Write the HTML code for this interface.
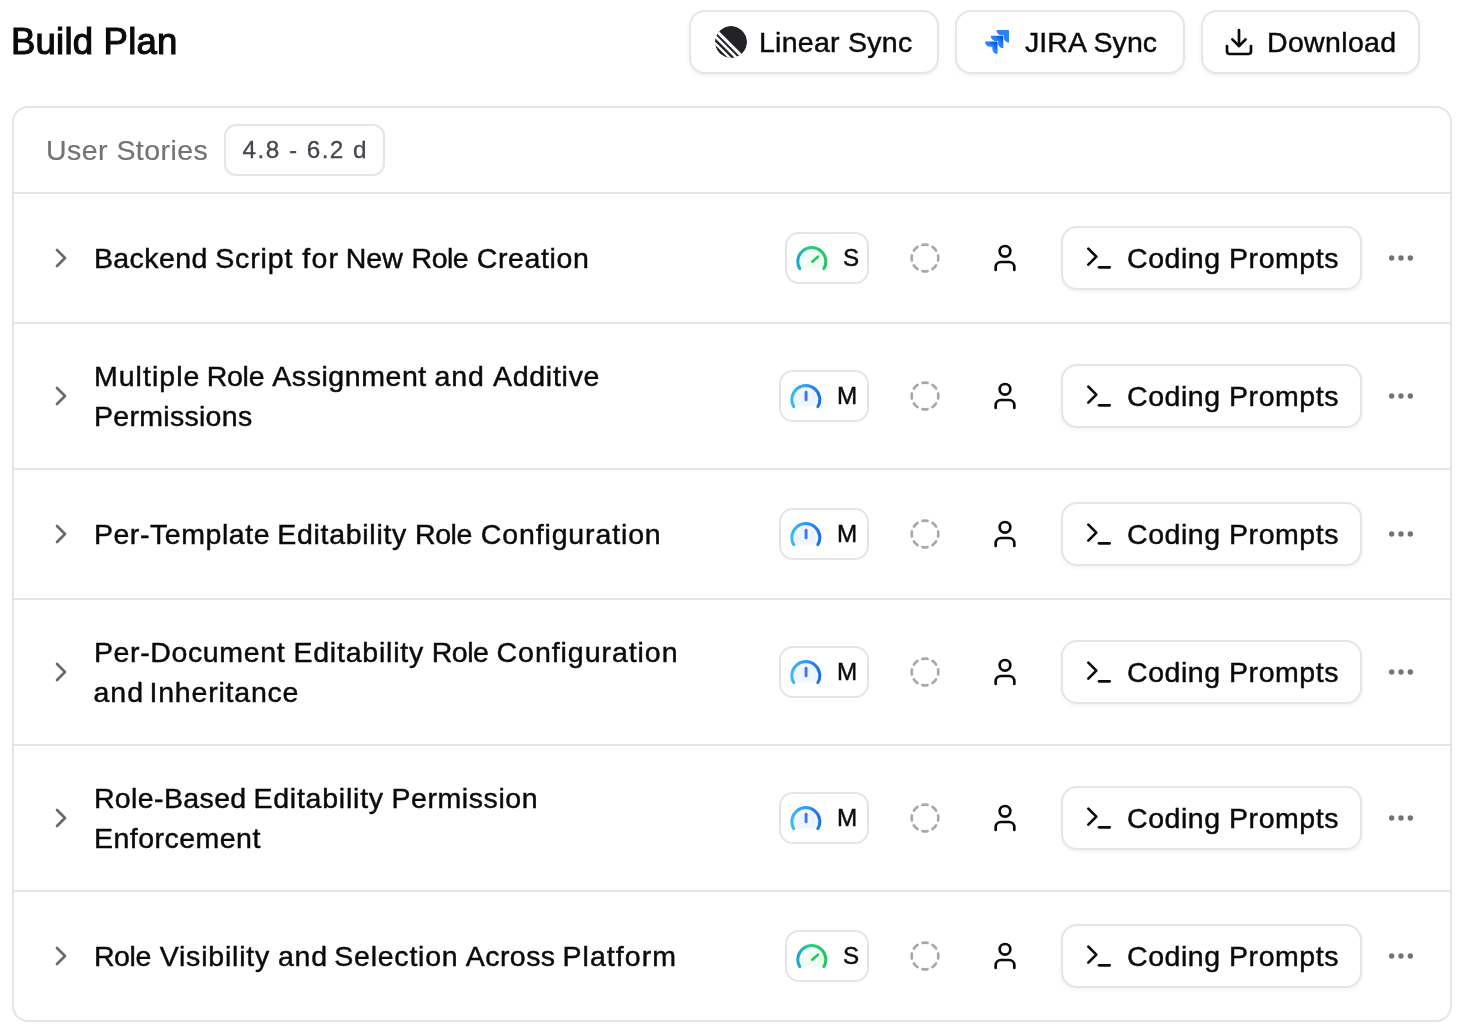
<!DOCTYPE html>
<html lang="en">
<head>
<meta charset="utf-8">
<title>Build Plan</title>
<style>
*{box-sizing:border-box;margin:0;padding:0}
html,body{width:1480px;height:1030px;background:#fff;overflow:hidden}
body{font-family:"Liberation Sans",sans-serif;color:#0a0a0a;position:relative}
h1{position:absolute;left:11.1px;top:20px;font-size:36.6px;line-height:44px;font-weight:400;-webkit-text-stroke:1.15px #0a0a0a;color:#0a0a0a;white-space:nowrap}
.btn{position:absolute;height:64px;top:10px;border:2px solid #e5e5e5;border-radius:16px;background:#fff;box-shadow:0 2px 4px rgba(0,0,0,.05);font-size:28.5px;line-height:40px;color:#0a0a0a;white-space:nowrap}
.btn svg{position:absolute}
.btn span{position:absolute;top:10px}
.card{position:absolute;left:12px;top:106px;width:1440px;height:916px;border:2px solid #e5e5e5;border-radius:16px;background:#fff}
.hdr{position:absolute;left:0;top:0;width:100%;height:86px;border-bottom:2px solid #e5e5e5}
.hdr .t{position:absolute;left:31.7px;top:21.5px;-webkit-text-stroke:.2px #737373;font-size:28.5px;line-height:40px;color:#737373;white-space:nowrap}
.hdr .b{position:absolute;left:210px;top:16px;width:161px;height:52px;-webkit-text-stroke:.3px #45464c;border:2px solid #e5e5e5;border-radius:12px;font-size:24.3px;line-height:47.6px;padding-left:1.6px;text-align:center;color:#45464c;white-space:nowrap}
.row{position:absolute;left:0;width:100%;border-bottom:2px solid #e5e5e5}
.row:last-child{border-bottom:none}
.chev{position:absolute;left:31px;top:50%;margin-top:-16px}
.txt{position:absolute;left:79.9px;top:50%;margin-top:-.35px;transform:translateY(-50%);font-size:28.5px;line-height:40px;color:#0a0a0a;white-space:nowrap}
.ln{display:block;position:relative;height:40px}
.w{position:absolute;top:0}
.size{position:absolute;top:50%;margin-top:-26px;height:52px;border:2px solid #e5e5e5;border-radius:14px;font-size:24.2px;line-height:30px;color:#0a0a0a}
.size.s{left:771.4px;width:83.4px}
.size.m{left:765.4px;width:89.4px}
.gauge{position:absolute;left:7.35px;top:7.9px}
.sl{position:absolute;top:9px}
.size.s .sl{left:55.2px}
.size.m .sl{left:56px}
.dash{position:absolute;left:895px;top:50%;margin-top:-16px}
.user{position:absolute;left:975px;top:50%;margin-top:-16px}
.cp{position:absolute;left:1047px;top:50%;margin-top:-32px;width:301px;height:64px;border:2px solid #e5e5e5;border-radius:16px;background:#fff;box-shadow:0 2px 4px rgba(0,0,0,.05);font-size:28.5px;line-height:40px;color:#0a0a0a;white-space:nowrap}
.term{position:absolute;left:20px;top:14px}
.cpt{position:absolute;left:63.7px;top:10px}
.dots{position:absolute;left:1371px;top:50%;margin-top:-16px}
.txt,.cpt,h1,.btn span,.hdr .t,.hdr .b,.sl{will-change:transform}
.txt,.cpt,.btn span,.sl{-webkit-text-stroke:.45px #0a0a0a}
</style>
</head>
<body>
<svg width="0" height="0" style="position:absolute">
  <defs>
    <linearGradient id="gS" x1="2" y1="0" x2="22" y2="0" gradientUnits="userSpaceOnUse"><stop offset="0" stop-color="#1ea5cf"/><stop offset=".4" stop-color="#25d087"/><stop offset="1" stop-color="#22c55e"/></linearGradient>
    <linearGradient id="gM" x1="2" y1="0" x2="22" y2="0" gradientUnits="userSpaceOnUse"><stop offset="0" stop-color="#38b8ff"/><stop offset=".5" stop-color="#3399f8"/><stop offset="1" stop-color="#1d6fe6"/></linearGradient>
    <linearGradient id="jg1" x1="12.3" y1="11.6" x2="7.2" y2="16.8" gradientUnits="userSpaceOnUse"><stop offset=".18" stop-color="#0052cc"/><stop offset="1" stop-color="#2684ff"/></linearGradient>
    <linearGradient id="jg2" x1="18" y1="5.8" x2="12.9" y2="11" gradientUnits="userSpaceOnUse"><stop offset=".18" stop-color="#0052cc"/><stop offset="1" stop-color="#2684ff"/></linearGradient>
    <clipPath id="lc"><circle cx="16" cy="16" r="16"/></clipPath>
  </defs>
</svg>
<h1 id="h1" style="letter-spacing:0.183px">Build Plan</h1>

<div class="btn" style="left:689px;width:250px">
  <svg style="left:24px;top:14px" width="32" height="32" viewBox="0 0 32 32"><g clip-path="url(#lc)"><circle cx="16" cy="16" r="16" fill="#222326"/><g stroke="#fff" fill="none"><path d="M-6 -2.66 L40 43.34" stroke-width="3.1"/><path d="M-6 4.2 L40 50.2" stroke-width="2.6"/><path d="M-6 11.12 L40 57.12" stroke-width="2.3"/></g></g></svg>
  <span id="b1" style="left:67.7px;top:9.6px;letter-spacing:0.267px">Linear Sync</span>
</div>
<div class="btn" style="left:955px;width:230px">
  <svg style="left:28px;top:18px" width="24" height="24" viewBox="0 0 24 24"><path fill="#2684ff" d="M23.013 0H11.455a5.215 5.215 0 0 0 5.215 5.215h2.129v2.057A5.215 5.215 0 0 0 24 12.483V1.005A1.001 1.001 0 0 0 23.013 0Z"/><path fill="url(#jg2)" d="M17.294 5.757H5.736a5.215 5.215 0 0 0 5.215 5.214h2.129v2.058a5.218 5.218 0 0 0 5.215 5.214V6.758a1.001 1.001 0 0 0-1.001-1.001z"/><path fill="url(#jg1)" d="M11.571 11.513H0a5.218 5.218 0 0 0 5.232 5.215h2.13v2.057A5.215 5.215 0 0 0 12.575 24V12.518a1.005 1.005 0 0 0-1.005-1.005z"/></svg>
  <span id="b2" style="left:68.3px;letter-spacing:0.077px">JIRA Sync</span>
</div>
<div class="btn" style="left:1201px;width:219px">
  <svg style="left:20px;top:14px" width="32" height="32" viewBox="0 0 24 24" fill="none" stroke="#0a0a0a" stroke-width="2" stroke-linecap="round" stroke-linejoin="round"><path d="M21 15v4a2 2 0 0 1-2 2H5a2 2 0 0 1-2-2v-4"/><polyline points="7 10 12 15 17 10"/><line x1="12" x2="12" y1="15" y2="3"/></svg>
  <span id="b3" style="left:64.3px;letter-spacing:0.341px">Download</span>
</div>

<div class="card">
  <div class="hdr"><span class="t" id="us" style="letter-spacing:0.459px">User Stories</span><span class="b"><span id="bd" style="letter-spacing:1.455px">4.8 - 6.2 d</span></span></div>
  <div class="row" style="top:86px;height:130px">
    <svg class="chev" width="32" height="32" viewBox="0 0 24 24" fill="none" stroke="#6a6a6a" stroke-width="2" stroke-linecap="round" stroke-linejoin="round"><path d="m9 18 6-6-6-6"/></svg>
    <div class="txt"><span class="ln" id="r0l0"><span class="w" id="r0l0w0" style="left:-0.11px;letter-spacing:0.409px">Backend</span><span class="w" id="r0l0w1" style="left:121.23px;letter-spacing:0.852px">Script</span><span class="w" id="r0l0w2" style="left:208.33px;letter-spacing:1.174px">for</span><span class="w" id="r0l0w3" style="left:251.87px;letter-spacing:-0.083px">New</span><span class="w" id="r0l0w4" style="left:317.55px;letter-spacing:-0.483px">Role</span><span class="w" id="r0l0w5" style="left:382.67px;letter-spacing:0.644px">Creation</span></span></div>
    <div class="size s"><svg class="gauge" width="33.6" height="33.6" viewBox="0 0 24 24" fill="none" stroke-width="2.15" stroke-linecap="round" stroke-linejoin="round"><path d="M3.34 19a10 10 0 1 1 17.32 0" fill="#f0fdf4" stroke="url(#gS)"/><path d="M12.35 14.1 16.45 10.45" stroke="#22c55e" stroke-width="1.85"/></svg><span class="sl">S</span></div>
    <svg class="dash" width="32" height="32" viewBox="0 0 24 24" fill="none" stroke="#a8a8a8" stroke-width="2" stroke-linecap="round" stroke-linejoin="round"><path d="M10.1 2.182a10 10 0 0 1 3.8 0"/><path d="M13.9 21.818a10 10 0 0 1-3.8 0"/><path d="M17.609 3.721a10 10 0 0 1 2.69 2.7"/><path d="M2.182 13.9a10 10 0 0 1 0-3.8"/><path d="M20.279 17.609a10 10 0 0 1-2.7 2.69"/><path d="M21.818 10.1a10 10 0 0 1 0 3.8"/><path d="M3.721 6.391a10 10 0 0 1 2.7-2.69"/><path d="M6.391 20.279a10 10 0 0 1-2.69-2.7"/></svg>
    <svg class="user" width="32" height="32" viewBox="0 0 24 24" fill="none" stroke="#0a0a0a" stroke-width="2" stroke-linecap="round" stroke-linejoin="round"><path d="M19 21v-2a4 4 0 0 0-4-4H9a4 4 0 0 0-4 4v2"/><circle cx="12" cy="7" r="4"/></svg>
    <div class="cp"><svg class="term" width="32" height="32" viewBox="0 0 24 24" fill="none" stroke="#0a0a0a" stroke-width="2" stroke-linecap="round" stroke-linejoin="round"><polyline points="4 17 10 11 4 5"/><line x1="12" x2="20" y1="19" y2="19"/></svg><span class="cpt" id="cp0" style="letter-spacing:0.547px">Coding Prompts</span></div>
    <svg class="dots" width="32" height="32" viewBox="0 0 24 24" fill="#737373" stroke="#737373" stroke-width="2" stroke-linecap="round" stroke-linejoin="round"><circle cx="12" cy="12" r="1"/><circle cx="19" cy="12" r="1"/><circle cx="5" cy="12" r="1"/></svg>
  </div>
  <div class="row" style="top:216px;height:146px">
    <svg class="chev" width="32" height="32" viewBox="0 0 24 24" fill="none" stroke="#6a6a6a" stroke-width="2" stroke-linecap="round" stroke-linejoin="round"><path d="m9 18 6-6-6-6"/></svg>
    <div class="txt"><span class="ln" id="r1l0"><span class="w" id="r1l0w0" style="left:-0.11px;letter-spacing:1.050px">Multiple</span><span class="w" id="r1l0w1" style="left:112.67px;letter-spacing:-0.261px">Role</span><span class="w" id="r1l0w2" style="left:178.30px;letter-spacing:0.559px">Assignment</span><span class="w" id="r1l0w3" style="left:340.59px;letter-spacing:0.881px">and</span><span class="w" id="r1l0w4" style="left:398.95px;letter-spacing:0.734px">Additive</span></span><span class="ln" id="r1l1"><span class="w" id="r1l1w0" style="left:0.00px;letter-spacing:0.292px">Permissions</span></span></div>
    <div class="size m"><svg class="gauge" width="33.6" height="33.6" viewBox="0 0 24 24" fill="none" stroke-width="2.15" stroke-linecap="round" stroke-linejoin="round"><path d="M3.34 19a10 10 0 1 1 17.32 0" fill="#eff6ff" stroke="url(#gM)"/><path d="M12.2 14.2V8.7" stroke="#3f74ff" stroke-width="2.1"/></svg><span class="sl">M</span></div>
    <svg class="dash" width="32" height="32" viewBox="0 0 24 24" fill="none" stroke="#a8a8a8" stroke-width="2" stroke-linecap="round" stroke-linejoin="round"><path d="M10.1 2.182a10 10 0 0 1 3.8 0"/><path d="M13.9 21.818a10 10 0 0 1-3.8 0"/><path d="M17.609 3.721a10 10 0 0 1 2.69 2.7"/><path d="M2.182 13.9a10 10 0 0 1 0-3.8"/><path d="M20.279 17.609a10 10 0 0 1-2.7 2.69"/><path d="M21.818 10.1a10 10 0 0 1 0 3.8"/><path d="M3.721 6.391a10 10 0 0 1 2.7-2.69"/><path d="M6.391 20.279a10 10 0 0 1-2.69-2.7"/></svg>
    <svg class="user" width="32" height="32" viewBox="0 0 24 24" fill="none" stroke="#0a0a0a" stroke-width="2" stroke-linecap="round" stroke-linejoin="round"><path d="M19 21v-2a4 4 0 0 0-4-4H9a4 4 0 0 0-4 4v2"/><circle cx="12" cy="7" r="4"/></svg>
    <div class="cp"><svg class="term" width="32" height="32" viewBox="0 0 24 24" fill="none" stroke="#0a0a0a" stroke-width="2" stroke-linecap="round" stroke-linejoin="round"><polyline points="4 17 10 11 4 5"/><line x1="12" x2="20" y1="19" y2="19"/></svg><span class="cpt" id="cp1" style="letter-spacing:0.547px">Coding Prompts</span></div>
    <svg class="dots" width="32" height="32" viewBox="0 0 24 24" fill="#737373" stroke="#737373" stroke-width="2" stroke-linecap="round" stroke-linejoin="round"><circle cx="12" cy="12" r="1"/><circle cx="19" cy="12" r="1"/><circle cx="5" cy="12" r="1"/></svg>
  </div>
  <div class="row" style="top:362px;height:130px">
    <svg class="chev" width="32" height="32" viewBox="0 0 24 24" fill="none" stroke="#6a6a6a" stroke-width="2" stroke-linecap="round" stroke-linejoin="round"><path d="m9 18 6-6-6-6"/></svg>
    <div class="txt"><span class="ln" id="r2l0"><span class="w" id="r2l0w0" style="left:-0.11px;letter-spacing:0.558px">Per-Template</span><span class="w" id="r2l0w1" style="left:183.20px;letter-spacing:0.718px">Editability</span><span class="w" id="r2l0w2" style="left:320.91px;letter-spacing:-0.360px">Role</span><span class="w" id="r2l0w3" style="left:386.75px;letter-spacing:0.870px">Configuration</span></span></div>
    <div class="size m"><svg class="gauge" width="33.6" height="33.6" viewBox="0 0 24 24" fill="none" stroke-width="2.15" stroke-linecap="round" stroke-linejoin="round"><path d="M3.34 19a10 10 0 1 1 17.32 0" fill="#eff6ff" stroke="url(#gM)"/><path d="M12.2 14.2V8.7" stroke="#3f74ff" stroke-width="2.1"/></svg><span class="sl">M</span></div>
    <svg class="dash" width="32" height="32" viewBox="0 0 24 24" fill="none" stroke="#a8a8a8" stroke-width="2" stroke-linecap="round" stroke-linejoin="round"><path d="M10.1 2.182a10 10 0 0 1 3.8 0"/><path d="M13.9 21.818a10 10 0 0 1-3.8 0"/><path d="M17.609 3.721a10 10 0 0 1 2.69 2.7"/><path d="M2.182 13.9a10 10 0 0 1 0-3.8"/><path d="M20.279 17.609a10 10 0 0 1-2.7 2.69"/><path d="M21.818 10.1a10 10 0 0 1 0 3.8"/><path d="M3.721 6.391a10 10 0 0 1 2.7-2.69"/><path d="M6.391 20.279a10 10 0 0 1-2.69-2.7"/></svg>
    <svg class="user" width="32" height="32" viewBox="0 0 24 24" fill="none" stroke="#0a0a0a" stroke-width="2" stroke-linecap="round" stroke-linejoin="round"><path d="M19 21v-2a4 4 0 0 0-4-4H9a4 4 0 0 0-4 4v2"/><circle cx="12" cy="7" r="4"/></svg>
    <div class="cp"><svg class="term" width="32" height="32" viewBox="0 0 24 24" fill="none" stroke="#0a0a0a" stroke-width="2" stroke-linecap="round" stroke-linejoin="round"><polyline points="4 17 10 11 4 5"/><line x1="12" x2="20" y1="19" y2="19"/></svg><span class="cpt" id="cp2" style="letter-spacing:0.547px">Coding Prompts</span></div>
    <svg class="dots" width="32" height="32" viewBox="0 0 24 24" fill="#737373" stroke="#737373" stroke-width="2" stroke-linecap="round" stroke-linejoin="round"><circle cx="12" cy="12" r="1"/><circle cx="19" cy="12" r="1"/><circle cx="5" cy="12" r="1"/></svg>
  </div>
  <div class="row" style="top:492px;height:146px">
    <svg class="chev" width="32" height="32" viewBox="0 0 24 24" fill="none" stroke="#6a6a6a" stroke-width="2" stroke-linecap="round" stroke-linejoin="round"><path d="m9 18 6-6-6-6"/></svg>
    <div class="txt"><span class="ln" id="r3l0"><span class="w" id="r3l0w0" style="left:-0.11px;letter-spacing:0.631px">Per-Document</span><span class="w" id="r3l0w1" style="left:199.42px;letter-spacing:0.787px">Editability</span><span class="w" id="r3l0w2" style="left:337.70px;letter-spacing:-0.444px">Role</span><span class="w" id="r3l0w3" style="left:402.56px;letter-spacing:0.951px">Configuration</span></span><span class="ln" id="r3l1"><span class="w" id="r3l1w0" style="left:-0.53px;letter-spacing:0.974px">and</span><span class="w" id="r3l1w1" style="left:55.54px;letter-spacing:0.787px">Inheritance</span></span></div>
    <div class="size m"><svg class="gauge" width="33.6" height="33.6" viewBox="0 0 24 24" fill="none" stroke-width="2.15" stroke-linecap="round" stroke-linejoin="round"><path d="M3.34 19a10 10 0 1 1 17.32 0" fill="#eff6ff" stroke="url(#gM)"/><path d="M12.2 14.2V8.7" stroke="#3f74ff" stroke-width="2.1"/></svg><span class="sl">M</span></div>
    <svg class="dash" width="32" height="32" viewBox="0 0 24 24" fill="none" stroke="#a8a8a8" stroke-width="2" stroke-linecap="round" stroke-linejoin="round"><path d="M10.1 2.182a10 10 0 0 1 3.8 0"/><path d="M13.9 21.818a10 10 0 0 1-3.8 0"/><path d="M17.609 3.721a10 10 0 0 1 2.69 2.7"/><path d="M2.182 13.9a10 10 0 0 1 0-3.8"/><path d="M20.279 17.609a10 10 0 0 1-2.7 2.69"/><path d="M21.818 10.1a10 10 0 0 1 0 3.8"/><path d="M3.721 6.391a10 10 0 0 1 2.7-2.69"/><path d="M6.391 20.279a10 10 0 0 1-2.69-2.7"/></svg>
    <svg class="user" width="32" height="32" viewBox="0 0 24 24" fill="none" stroke="#0a0a0a" stroke-width="2" stroke-linecap="round" stroke-linejoin="round"><path d="M19 21v-2a4 4 0 0 0-4-4H9a4 4 0 0 0-4 4v2"/><circle cx="12" cy="7" r="4"/></svg>
    <div class="cp"><svg class="term" width="32" height="32" viewBox="0 0 24 24" fill="none" stroke="#0a0a0a" stroke-width="2" stroke-linecap="round" stroke-linejoin="round"><polyline points="4 17 10 11 4 5"/><line x1="12" x2="20" y1="19" y2="19"/></svg><span class="cpt" id="cp3" style="letter-spacing:0.547px">Coding Prompts</span></div>
    <svg class="dots" width="32" height="32" viewBox="0 0 24 24" fill="#737373" stroke="#737373" stroke-width="2" stroke-linecap="round" stroke-linejoin="round"><circle cx="12" cy="12" r="1"/><circle cx="19" cy="12" r="1"/><circle cx="5" cy="12" r="1"/></svg>
  </div>
  <div class="row" style="top:638px;height:146px">
    <svg class="chev" width="32" height="32" viewBox="0 0 24 24" fill="none" stroke="#6a6a6a" stroke-width="2" stroke-linecap="round" stroke-linejoin="round"><path d="m9 18 6-6-6-6"/></svg>
    <div class="txt"><span class="ln" id="r4l0"><span class="w" id="r4l0w0" style="left:-0.11px;letter-spacing:0.379px">Role-Based</span><span class="w" id="r4l0w1" style="left:159.41px;letter-spacing:0.770px">Editability</span><span class="w" id="r4l0w2" style="left:297.40px;letter-spacing:0.584px">Permission</span></span><span class="ln" id="r4l1"><span class="w" id="r4l1w0" style="left:0.00px;letter-spacing:0.474px">Enforcement</span></span></div>
    <div class="size m"><svg class="gauge" width="33.6" height="33.6" viewBox="0 0 24 24" fill="none" stroke-width="2.15" stroke-linecap="round" stroke-linejoin="round"><path d="M3.34 19a10 10 0 1 1 17.32 0" fill="#eff6ff" stroke="url(#gM)"/><path d="M12.2 14.2V8.7" stroke="#3f74ff" stroke-width="2.1"/></svg><span class="sl">M</span></div>
    <svg class="dash" width="32" height="32" viewBox="0 0 24 24" fill="none" stroke="#a8a8a8" stroke-width="2" stroke-linecap="round" stroke-linejoin="round"><path d="M10.1 2.182a10 10 0 0 1 3.8 0"/><path d="M13.9 21.818a10 10 0 0 1-3.8 0"/><path d="M17.609 3.721a10 10 0 0 1 2.69 2.7"/><path d="M2.182 13.9a10 10 0 0 1 0-3.8"/><path d="M20.279 17.609a10 10 0 0 1-2.7 2.69"/><path d="M21.818 10.1a10 10 0 0 1 0 3.8"/><path d="M3.721 6.391a10 10 0 0 1 2.7-2.69"/><path d="M6.391 20.279a10 10 0 0 1-2.69-2.7"/></svg>
    <svg class="user" width="32" height="32" viewBox="0 0 24 24" fill="none" stroke="#0a0a0a" stroke-width="2" stroke-linecap="round" stroke-linejoin="round"><path d="M19 21v-2a4 4 0 0 0-4-4H9a4 4 0 0 0-4 4v2"/><circle cx="12" cy="7" r="4"/></svg>
    <div class="cp"><svg class="term" width="32" height="32" viewBox="0 0 24 24" fill="none" stroke="#0a0a0a" stroke-width="2" stroke-linecap="round" stroke-linejoin="round"><polyline points="4 17 10 11 4 5"/><line x1="12" x2="20" y1="19" y2="19"/></svg><span class="cpt" id="cp4" style="letter-spacing:0.547px">Coding Prompts</span></div>
    <svg class="dots" width="32" height="32" viewBox="0 0 24 24" fill="#737373" stroke="#737373" stroke-width="2" stroke-linecap="round" stroke-linejoin="round"><circle cx="12" cy="12" r="1"/><circle cx="19" cy="12" r="1"/><circle cx="5" cy="12" r="1"/></svg>
  </div>
  <div class="row" style="top:784px;height:128px">
    <svg class="chev" width="32" height="32" viewBox="0 0 24 24" fill="none" stroke="#6a6a6a" stroke-width="2" stroke-linecap="round" stroke-linejoin="round"><path d="m9 18 6-6-6-6"/></svg>
    <div class="txt"><span class="ln" id="r5l0"><span class="w" id="r5l0w0" style="left:-0.11px;letter-spacing:-0.426px">Role</span><span class="w" id="r5l0w1" style="left:65.64px;letter-spacing:0.810px">Visibility</span><span class="w" id="r5l0w2" style="left:183.94px;letter-spacing:0.809px">and</span><span class="w" id="r5l0w3" style="left:240.26px;letter-spacing:0.769px">Selection</span><span class="w" id="r5l0w4" style="left:371.71px;letter-spacing:0.459px">Across</span><span class="w" id="r5l0w5" style="left:468.46px;letter-spacing:1.071px">Platform</span></span></div>
    <div class="size s"><svg class="gauge" width="33.6" height="33.6" viewBox="0 0 24 24" fill="none" stroke-width="2.15" stroke-linecap="round" stroke-linejoin="round"><path d="M3.34 19a10 10 0 1 1 17.32 0" fill="#f0fdf4" stroke="url(#gS)"/><path d="M12.35 14.1 16.45 10.45" stroke="#22c55e" stroke-width="1.85"/></svg><span class="sl">S</span></div>
    <svg class="dash" width="32" height="32" viewBox="0 0 24 24" fill="none" stroke="#a8a8a8" stroke-width="2" stroke-linecap="round" stroke-linejoin="round"><path d="M10.1 2.182a10 10 0 0 1 3.8 0"/><path d="M13.9 21.818a10 10 0 0 1-3.8 0"/><path d="M17.609 3.721a10 10 0 0 1 2.69 2.7"/><path d="M2.182 13.9a10 10 0 0 1 0-3.8"/><path d="M20.279 17.609a10 10 0 0 1-2.7 2.69"/><path d="M21.818 10.1a10 10 0 0 1 0 3.8"/><path d="M3.721 6.391a10 10 0 0 1 2.7-2.69"/><path d="M6.391 20.279a10 10 0 0 1-2.69-2.7"/></svg>
    <svg class="user" width="32" height="32" viewBox="0 0 24 24" fill="none" stroke="#0a0a0a" stroke-width="2" stroke-linecap="round" stroke-linejoin="round"><path d="M19 21v-2a4 4 0 0 0-4-4H9a4 4 0 0 0-4 4v2"/><circle cx="12" cy="7" r="4"/></svg>
    <div class="cp"><svg class="term" width="32" height="32" viewBox="0 0 24 24" fill="none" stroke="#0a0a0a" stroke-width="2" stroke-linecap="round" stroke-linejoin="round"><polyline points="4 17 10 11 4 5"/><line x1="12" x2="20" y1="19" y2="19"/></svg><span class="cpt" id="cp5" style="letter-spacing:0.547px">Coding Prompts</span></div>
    <svg class="dots" width="32" height="32" viewBox="0 0 24 24" fill="#737373" stroke="#737373" stroke-width="2" stroke-linecap="round" stroke-linejoin="round"><circle cx="12" cy="12" r="1"/><circle cx="19" cy="12" r="1"/><circle cx="5" cy="12" r="1"/></svg>
  </div>
</div>
</body>
</html>
